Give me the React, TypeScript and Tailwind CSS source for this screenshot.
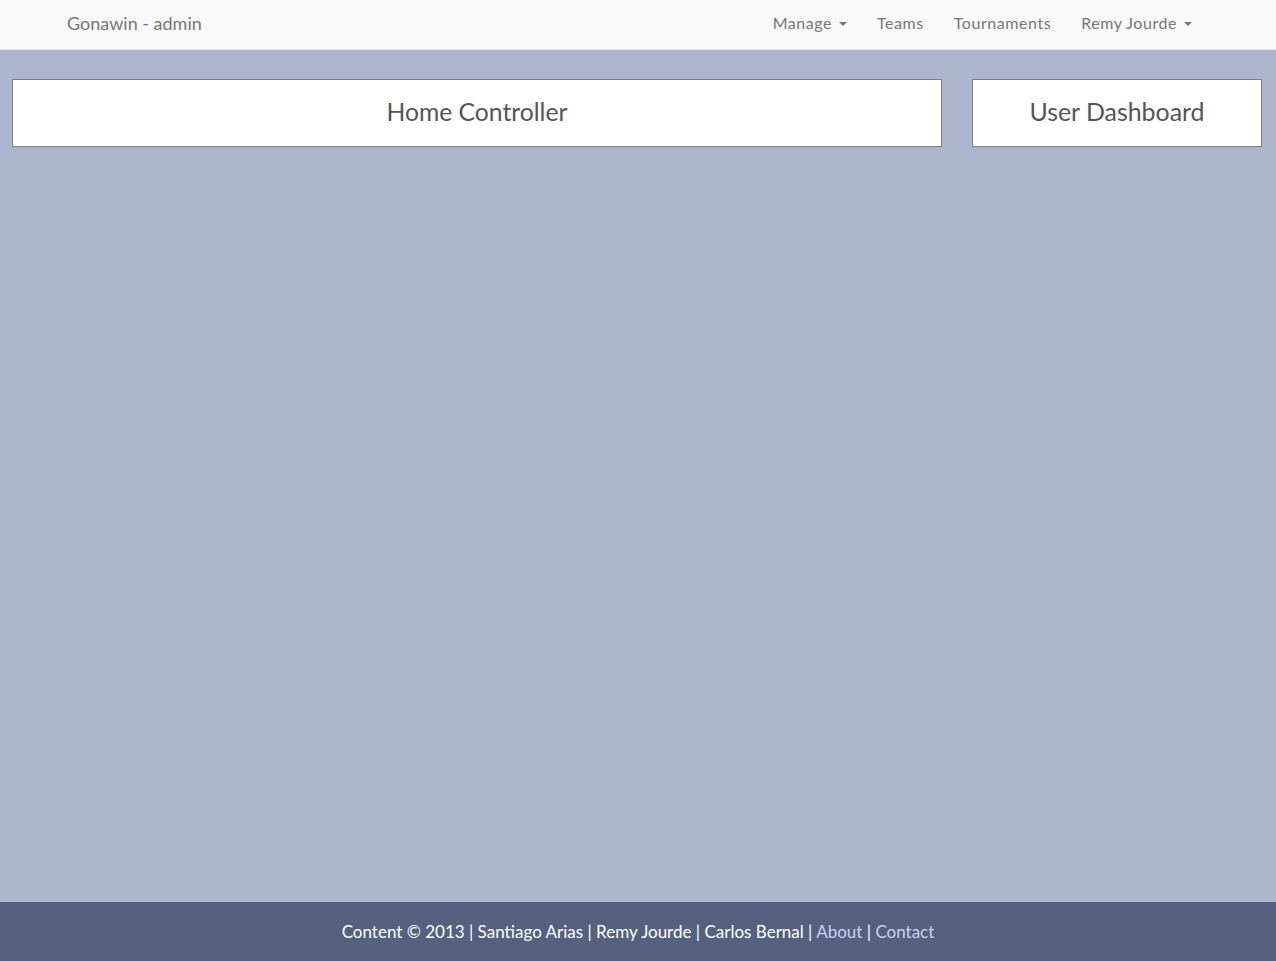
function Caret() {
  return (
    <span className="ml-[7px] inline-block h-0 w-0 border-x-[4px] border-t-[4px] border-x-transparent border-t-[#777] align-middle" />
  )
}

const navItems = [
  { label: 'Manage', dropdown: true },
  { label: 'Teams', dropdown: false },
  { label: 'Tournaments', dropdown: false },
  { label: 'Remy Jourde', dropdown: true },
]

export default function App() {
  return (
    <div className="flex min-h-[961px] flex-col bg-[#adb4ce] font-['Lato',sans-serif]">
      {/* Navbar */}
      <nav className="flex h-[50px] items-center border-b border-[#e7e7e7] bg-[#f8f8f8] pb-[2px] pl-[67px] pr-[69px]">
        <span className="text-[18px] text-[#777]">Gonawin - admin</span>
        <ul className="ml-auto flex items-center pb-[2px]">
          {navItems.map(item => (
            <li key={item.label} className="px-[15px] text-[16px] tracking-[0.55px] text-[#777]">
              {item.label}
              {item.dropdown && <Caret />}
            </li>
          ))}
        </ul>
      </nav>

      {/* Content */}
      <main className="flex flex-1 gap-[30px] pl-[12px] pr-[14px] pt-[29px]">
        <div className="flex h-[68px] flex-1 items-center justify-center border border-[#808080] bg-white pb-[2px]">
          <h2 className="text-[24.7px] text-[#555]">Home Controller</h2>
        </div>
        <div className="flex h-[68px] w-[290px] items-center justify-center border border-[#808080] bg-white pb-[2px]">
          <h2 className="text-[24.9px] text-[#555]">User Dashboard</h2>
        </div>
      </main>

      {/* Footer */}
      <footer className="flex h-[59px] items-center justify-center bg-[#55617f] text-[17px] text-white">
        <span>
          Content © 2013 | Santiago Arias | Remy Jourde | Carlos Bernal |{' '}
          <a className="text-[#c9d3ef]">About</a> | <a className="text-[#c9d3ef]">Contact</a>
        </span>
      </footer>
    </div>
  )
}
